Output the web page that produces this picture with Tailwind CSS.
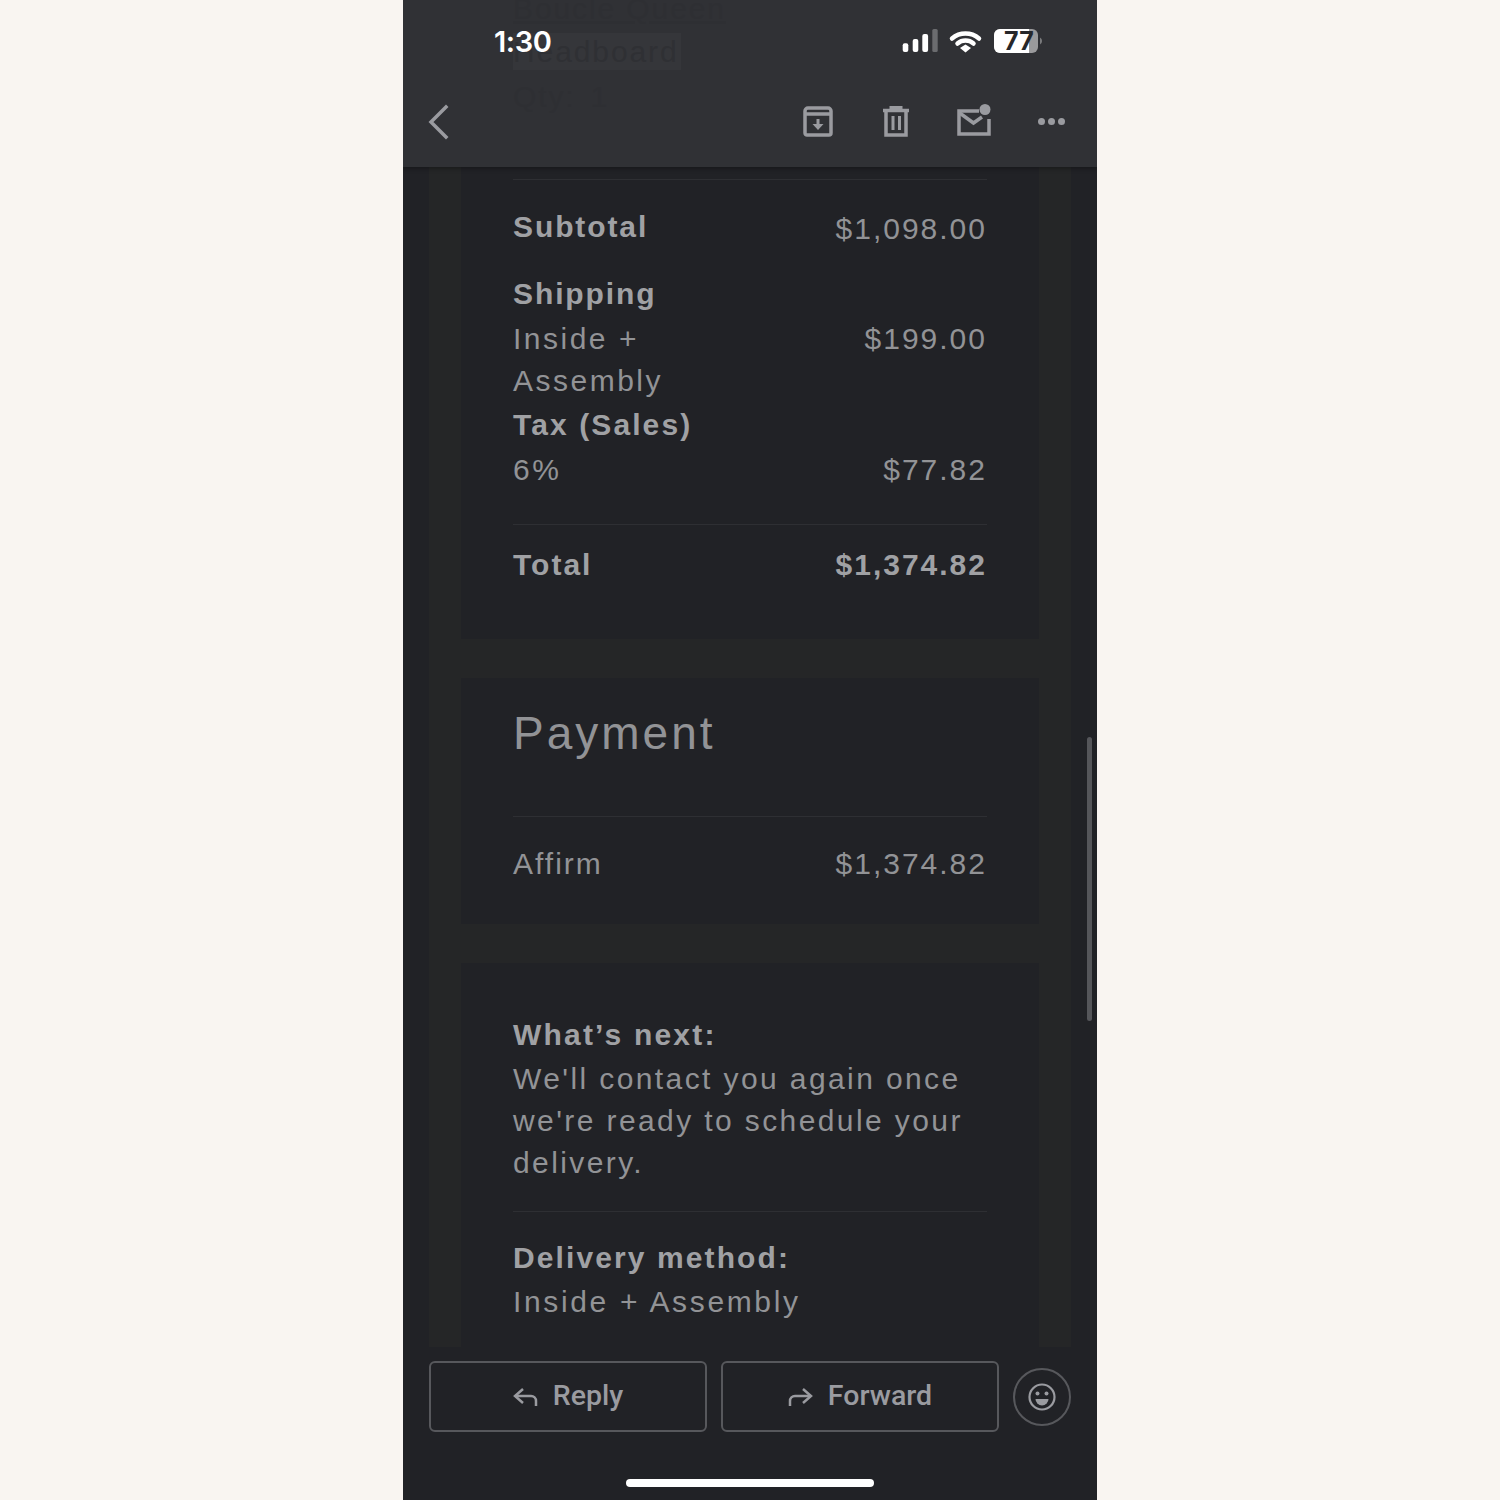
<!DOCTYPE html>
<html lang="en">
    <head>
        <meta charset="UTF-8" />
        <meta name="viewport" content="width=device-width, initial-scale=1.0" />
        <title>Order email</title>
        <script src="https://cdn.jsdelivr.net/npm/@tailwindcss/browser@4"></script>
    </head>
    <body class="bg-[#f9f5f1] flex justify-center font-['Liberation_Sans',sans-serif]">
        <div class="relative flex flex-col w-[694px] h-[1500px] bg-[#212226] overflow-hidden">
            <!-- Header -->
            <header class="relative h-[167px] shrink-0 bg-[#303135] shadow-[0_2px_4px_rgba(0,0,0,0.3)] z-10">
                <!-- Email content showing through the bar -->
                <div class="absolute left-[110px] top-[-13px] text-[30px] tracking-[1.9px] text-[#2e2f33] leading-[44px]">
                    <div class="underline">Boucle Queen</div>
                    <div class="bg-[#35363a] w-[168px] h-[37px] mt-[2px] leading-[37px] text-[#2f3034]">Headboard</div>
                    <div class="mt-[5px] flex gap-[15px]"><span>Qty:</span><span>1</span></div>
                </div>

                <div class="absolute left-[91px] top-[24px] text-white text-[29px] leading-[36px] font-semibold font-['Inter',sans-serif] tracking-[-0.4px]">1:30</div>

                <!-- Status icons -->
                <svg class="absolute left-[499px] top-[28px]" width="146" height="28" viewBox="0 0 146 28">
                    <rect x="0.700" y="15.300" width="5.600" height="8.700" rx="2" fill="#fff" />
                    <rect x="10.700" y="11" width="5.600" height="13" rx="2" fill="#fff" />
                    <rect x="20.300" y="6" width="5.800" height="18" rx="2" fill="#fff" />
                    <rect x="30.300" y="1" width="5.400" height="23" rx="1.500" fill="#6b6c6f" />
                    <path d="M50 10.500a21 21 0 0 1 27 0" fill="none" stroke="#fff" stroke-width="4.500" stroke-linecap="round" />
                    <path d="M55.500 15.500a12.500 12.500 0 0 1 16 0" fill="none" stroke="#fff" stroke-width="4.500" stroke-linecap="round" />
                    <path d="M58 20l5.500-3.500 5.500 3.500-5.500 4.500z" fill="#fff" />
                    <rect x="92" y="1" width="44" height="24" rx="6" fill="#9a9a9c" />
                    <path d="M98 1h29v24h-29a6 6 0 0 1-6-6v-12a6 6 0 0 1 6-6z" fill="#fff" />
                    <path d="M138 9.500a4 4 0 0 1 0 7z" fill="#7a7b7d" />
                </svg>
                <div class="absolute left-[601px] top-[27px] text-[25px] leading-[28px] font-bold text-[#26272a] tracking-[0.3px] font-['Inter',sans-serif]">77</div>

                <!-- Toolbar -->
                <svg class="absolute left-[24px] top-[104px]" width="24" height="36" viewBox="0 0 24 36">
                    <path d="M19 3 4 18l15 15" fill="none" stroke="#9a9ba0" stroke-width="3.500" stroke-linecap="square" />
                </svg>
                <svg class="absolute left-[400px] top-[106px]" width="30" height="31" viewBox="0 0 30 31" fill="none" stroke="#9a9ba0" stroke-width="3.500">
                    <path d="M2 8V5a3 3 0 0 1 3-3h20a3 3 0 0 1 3 3v3M2 8h26v19a2 2 0 0 1-2 2H4a2 2 0 0 1-2-2z" />
                    <path d="M15 13v8" stroke-width="3" />
                    <path d="M9.500 18 15 24l5.500-6z" fill="#9a9ba0" stroke="none" />
                </svg>
                <svg class="absolute left-[480px] top-[106px]" width="26" height="31" viewBox="0 0 26 31" fill="none" stroke="#9a9ba0" stroke-width="3.500">
                    <path d="M0 4.500h26" />
                    <path d="M8 3V1.500h10V3" stroke-width="3" />
                    <path d="M3 5v24h20V5" />
                    <path d="M10 10v14M16.500 10v14" stroke-width="3" />
                </svg>
                <svg class="absolute left-[554px] top-[104px]" width="34" height="32" viewBox="0 0 34 32" fill="none" stroke="#9a9ba0" stroke-width="3.500">
                    <path d="M22 7H2v23h30V15" />
                    <path d="M2 8.500 16.500 19l8.500-6" />
                    <circle cx="28" cy="5.500" r="5.500" fill="#9a9ba0" stroke="none" />
                </svg>
                <div class="absolute left-[635px] top-[118px] flex gap-[3px]">
                    <div class="w-[7px] h-[7px] rounded-full bg-[#9a9ba0]"></div>
                    <div class="w-[7px] h-[7px] rounded-full bg-[#9a9ba0]"></div>
                    <div class="w-[7px] h-[7px] rounded-full bg-[#9a9ba0]"></div>
                </div>
            </header>

            <!-- Email body -->
            <main class="relative h-[1180px] shrink-0 overflow-hidden">
                <div class="mx-[26px] h-full bg-[#252627] px-[32px]">
                    <section class="h-[472px] bg-[#212226] px-[52px] text-[30px] tracking-[2.500px] text-[#929396]">
                        <div class="h-[13px] border-b border-[#2e2f33]"></div>
                        <div class="flex justify-between items-center h-[44px] mt-[26px]">
                            <span class="font-bold text-[#a0a1a4] tracking-[1.900px] mt-[-4px]">Subtotal</span><span class="tracking-[2px]">$1,098.00</span>
                        </div>
                        <div class="font-bold text-[#a0a1a4] tracking-[1.900px] h-[44px] leading-[44px] mt-[22px]">Shipping</div>
                        <div class="flex justify-between leading-[42px] mt-[2px]">
                            <span class="w-[200px]">Inside + Assembly</span><span class="tracking-[2px]">$199.00</span>
                        </div>
                        <div class="font-bold text-[#a0a1a4] tracking-[2.100px] h-[44px] leading-[44px] mt-[1px]">Tax (Sales)</div>
                        <div class="flex justify-between leading-[42px] mt-[2px]">
                            <span>6%</span><span class="tracking-[2px]">$77.82</span>
                        </div>
                        <div class="border-b border-[#2e2f33] h-[34px]"></div>
                        <div class="flex justify-between items-center h-[44px] mt-[17px] font-bold text-[#a0a1a4] tracking-[2px]">
                            <span>Total</span><span>$1,374.82</span>
                        </div>
                    </section>

                    <section class="h-[246px] mt-[39px] bg-[#212226] px-[52px] text-[30px] tracking-[2px] text-[#929396]">
                        <div class="h-[139px] border-b border-[#2e2f33] pt-[26px] text-[46px] leading-[58px] tracking-[3px]">Payment</div>
                        <div class="flex justify-between items-center h-[44px] mt-[24px]">
                            <span>Affirm</span><span>$1,374.82</span>
                        </div>
                    </section>

                    <section class="h-[400px] mt-[39px] bg-[#212226] px-[52px] text-[30px] tracking-[2.400px] text-[#929396]">
                        <div class="font-bold text-[#a0a1a4] leading-[44px] pt-[50px] tracking-[2.200px]">What’s next:</div>
                        <div class="leading-[42px] mt-[1px]">We'll contact you again once we're ready to schedule your delivery.</div>
                        <div class="border-b border-[#2e2f33] h-[28px]"></div>
                        <div class="font-bold text-[#a0a1a4] leading-[44px] mt-[24px] tracking-[2.100px]">Delivery method:</div>
                        <div class="leading-[42px] mt-[1px] tracking-[2.650px]">Inside + Assembly</div>
                    </section>
                </div>
                <!-- Scrollbar -->
                <div class="absolute right-[5px] top-[570px] w-[5px] h-[284px] rounded-full bg-[#55565a]"></div>
            </main>

            <!-- Action bar -->
            <footer class="flex-1 bg-[#212226] px-[26px] pt-[14px] relative font-['Roboto',sans-serif] font-medium text-[28.500px] text-[#9a9ba0]">
                <div class="flex items-start gap-[14px]">
                    <button class="flex items-center justify-center gap-[15px] w-[278px] h-[71px] border-2 border-[#57585c] rounded-[6px]">
                        <svg width="25" height="20" viewBox="0 0 25 20" fill="none" stroke="#9a9ba0" stroke-width="2.500">
                            <path d="M10 2 2 9l8 7" />
                            <path d="M2 9h16a5 5 0 0 1 5 5v5" />
                        </svg>
                        <span>Reply</span>
                    </button>
                    <button class="flex items-center justify-center gap-[15px] w-[278px] h-[71px] border-2 border-[#57585c] rounded-[6px]">
                        <svg width="25" height="20" viewBox="0 0 25 20" fill="none" stroke="#9a9ba0" stroke-width="2.500">
                            <path d="M15 2l8 7-8 7" />
                            <path d="M23 9H7a5 5 0 0 0-5 5v5" />
                        </svg>
                        <span>Forward</span>
                    </button>
                    <button class="flex items-center justify-center w-[58px] h-[58px] mt-[7px] border-2 border-[#57585c] rounded-full">
                        <svg width="28" height="28" viewBox="0 0 28 28" fill="none" stroke="#9a9ba0" stroke-width="2.200">
                            <circle cx="14" cy="14" r="12.500" />
                            <circle cx="9.500" cy="10.500" r="2" fill="#9a9ba0" stroke="none" />
                            <circle cx="18.500" cy="10.500" r="2" fill="#9a9ba0" stroke="none" />
                            <path d="M7.500 16h13a6.500 6.500 0 0 1-13 0z" fill="#9a9ba0" stroke="none" />
                        </svg>
                    </button>
                </div>
                <div class="absolute left-[223px] bottom-[13px] w-[248px] h-[8px] rounded-full bg-white"></div>
            </footer>
        </div>
    </body>
</html>
